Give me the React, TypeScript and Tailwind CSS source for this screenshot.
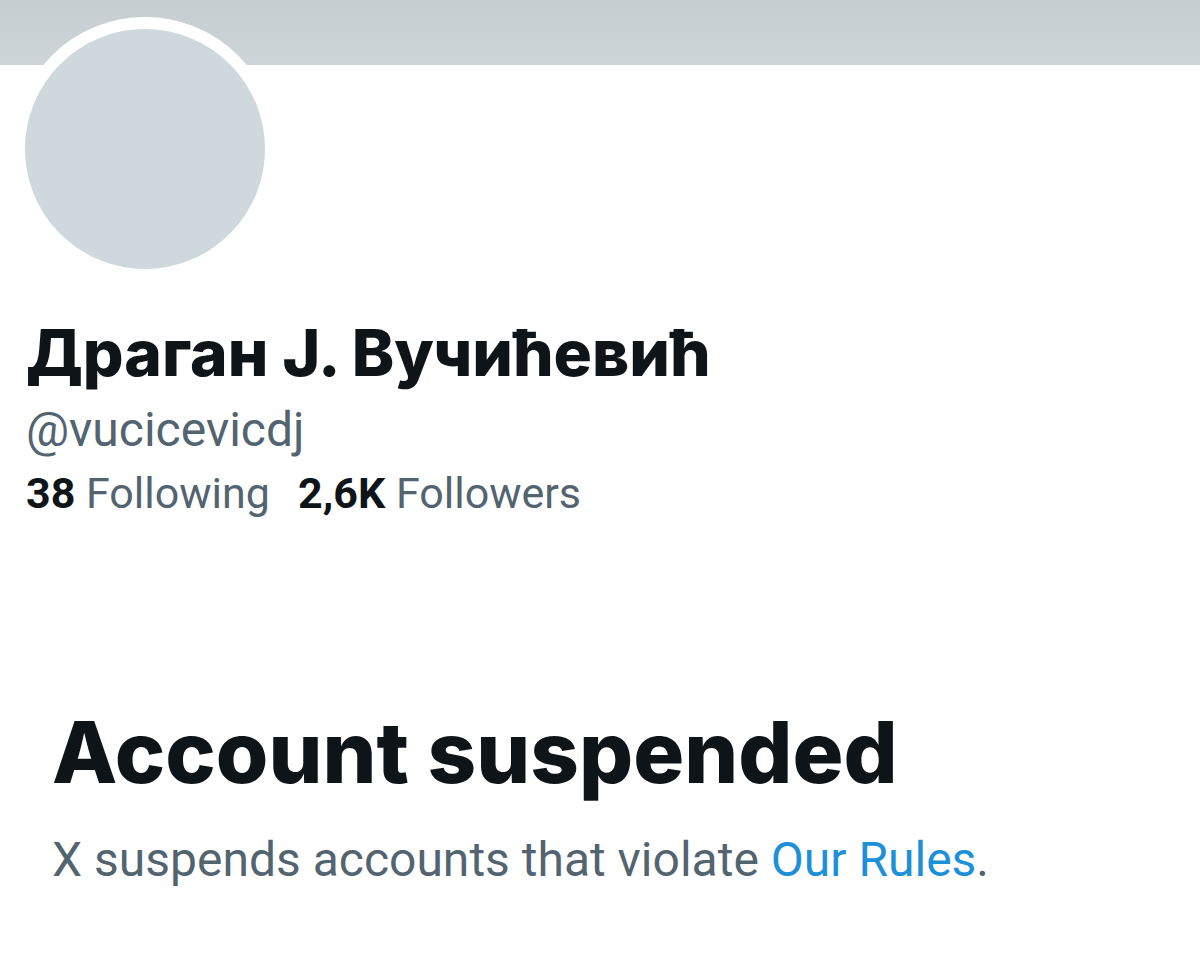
const profile = {
  name: 'Драган J. Вучићевић',
  handle: '@vucicevicdj',
  following: '38',
  followers: '2,6K',
};

export default function App() {
  return (
    <main className="min-h-screen bg-white font-['Roboto',sans-serif] text-[#0f1419]">
      {/* Banner */}
      <div className="h-[65px] bg-linear-to-b from-[#c6ced2] to-[#cdd5d9]" />

      {/* Profile header */}
      <header className="px-[26px]">
        <div className="relative -mt-12 -ml-[13px] size-[264px] rounded-full border-12 border-white bg-[#cfd8dc]" />
        <h1 className="mt-8 font-['Inter',sans-serif] text-[64px] leading-[80px] font-extrabold">
          {profile.name}
        </h1>
        <p className="mt-1 text-[48px] leading-[66px] text-[#536471]">{profile.handle}</p>
        <div className="flex flex-wrap gap-x-7 text-[43px] leading-[60px] text-[#536471]">
          <a href="#following">
            <span className="font-bold text-[#0f1419]">{profile.following}</span> Following
          </a>
          <a href="#followers">
            <span className="font-bold text-[#0f1419]">{profile.followers}</span> Followers
          </a>
        </div>
      </header>

      {/* Suspension notice */}
      <section className="mt-44 px-[52px]">
        <h2 className="font-['Inter',sans-serif] text-[85px] leading-[108px] font-extrabold">Account suspended</h2>
        <p className="mt-5 text-[48px] leading-[66px] text-[#536471]">
          X suspends accounts that violate{' '}
          <a href="#rules" className="text-[#1d90d8]">Our Rules</a>.
        </p>
      </section>
    </main>
  );
}
